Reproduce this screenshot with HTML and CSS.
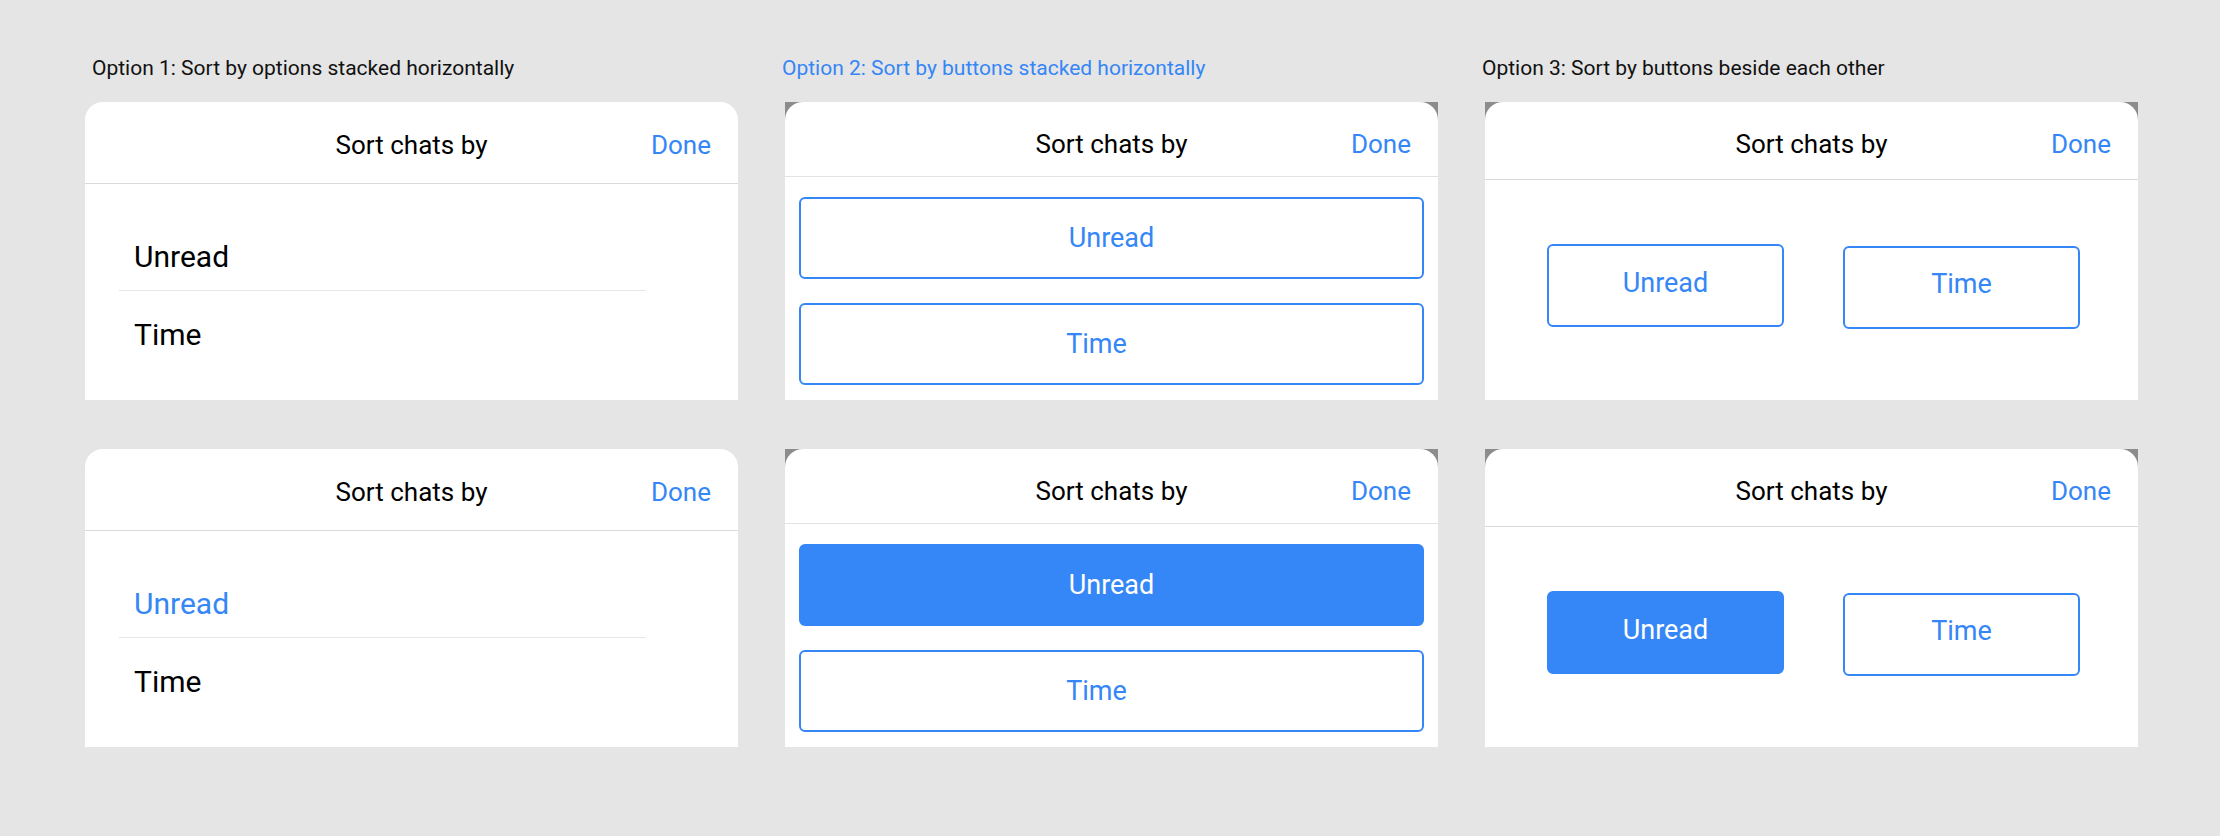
FILE: index.html
```html
<!DOCTYPE html>
<html lang="en">
<head>
<meta charset="utf-8">
<title>Sort chats by – options</title>
<link rel="stylesheet" href="styles.css">
</head>
<body>
<main class="board">
  <div class="col">
    <p class="label label-first">Option 1: Sort by options stacked horizontally</p>
    <section class="card">
      <header class="head head-tall"><span class="title">Sort chats by</span><span class="done">Done</span></header>
      <ul class="list">
        <li class="row">Unread</li>
        <li class="row">Time</li>
      </ul>
    </section>
    <section class="card card-second">
      <header class="head head-tall"><span class="title">Sort chats by</span><span class="done">Done</span></header>
      <ul class="list">
        <li class="row row-active">Unread</li>
        <li class="row">Time</li>
      </ul>
    </section>
  </div>

  <div class="col">
    <p class="label label-active">Option 2: Sort by buttons stacked horizontally</p>
    <div class="frame">
      <section class="card">
        <header class="head head-short"><span class="title">Sort chats by</span><span class="done">Done</span></header>
        <div class="stack">
          <div class="btn">Unread</div>
          <div class="btn btn-shift">Time</div>
        </div>
      </section>
    </div>
    <div class="frame card-second">
      <section class="card">
        <header class="head head-short"><span class="title">Sort chats by</span><span class="done">Done</span></header>
        <div class="stack">
          <div class="btn btn-filled">Unread</div>
          <div class="btn btn-shift">Time</div>
        </div>
      </section>
    </div>
  </div>

  <div class="col">
    <p class="label">Option 3: Sort by buttons beside each other</p>
    <div class="frame">
      <section class="card">
        <header class="head head-mid"><span class="title">Sort chats by</span><span class="done">Done</span></header>
        <div class="pair">
          <div class="btn btn-half">Unread</div>
          <div class="btn btn-half btn-low">Time</div>
        </div>
      </section>
    </div>
    <div class="frame card-second">
      <section class="card">
        <header class="head head-mid"><span class="title">Sort chats by</span><span class="done">Done</span></header>
        <div class="pair">
          <div class="btn btn-half btn-filled">Unread</div>
          <div class="btn btn-half btn-low">Time</div>
        </div>
      </section>
    </div>
  </div>
</main>
</body>
</html>
```
FILE: styles.css
```css
* {
  box-sizing: border-box;
}

html,
body {
  margin: 0;
  padding: 0;
}

body {
  background: #e5e5e5;
  font-family: Roboto, "Liberation Sans", Arial, sans-serif;
  color: #111;
  width: 2220px;
  height: 836px;
  overflow: hidden;
}

.board {
  display: flex;
  gap: 47px;
  padding: 56px 0 0 85px;
}

.col {
  display: flex;
  flex-direction: column;
  width: 653px;
}

.label {
  margin: 0 0 22px -3px;
  font-size: 21px;
  line-height: 24px;
  color: #111;
  white-space: nowrap;
}

.label-first {
  margin-left: 7px;
}

.label-active {
  color: #3586f6;
}

.card-second {
  margin-top: 49px;
}

.frame {
  background: #8c8c8c;
}

.card {
  display: block;
  width: 653px;
  height: 298px;
  background: #fff;
  border-radius: 18px 18px 0 0;
  overflow: hidden;
}

.head {
  display: grid;
  grid-template-columns: 1fr auto 1fr;
  align-items: start;
  border-bottom: 1px solid #dadada;
  font-size: 26px;
  line-height: 30px;
  padding-top: 28px;
}

.head-tall {
  height: 82px;
}

.head-short {
  height: 75px;
  padding-top: 27px;
  border-bottom-color: #e3e3e3;
}

.head-mid {
  height: 78px;
  padding-top: 27px;
}

.title {
  grid-column: 2;
  color: #000;
}

.done {
  grid-column: 3;
  justify-self: end;
  padding-right: 27px;
  color: #3586f6;
}

.list {
  list-style: none;
  margin: 0 0 0 34px;
  padding: 29px 0 0;
  width: 527px;
}

.row {
  height: 77px;
  padding: 24px 0 0 15px;
  font-size: 30px;
  line-height: 40px;
  color: #000;
}

.row:first-child {
  height: 78px;
  border-bottom: 1px solid #e6e6e6;
}

.row-active {
  color: #3586f6;
}

.stack {
  display: flex;
  flex-direction: column;
  gap: 24px;
  padding: 20px 14px 0;
}

.btn {
  display: flex;
  align-items: center;
  justify-content: center;
  height: 82px;
  border: 2px solid #3586f6;
  border-radius: 6px;
  color: #3586f6;
  font-size: 27px;
  line-height: 32px;
}

.btn-shift {
  padding-right: 30px;
}

.btn-filled {
  background: #3586f6;
  color: #fff;
}

.pair {
  display: flex;
  align-items: flex-start;
  gap: 59px;
  padding: 64px 0 0 62px;
}

.btn-half {
  width: 237px;
  height: 83px;
  padding-bottom: 5px;
}

.btn-low {
  margin-top: 2px;
  padding-bottom: 8px;
}
```
